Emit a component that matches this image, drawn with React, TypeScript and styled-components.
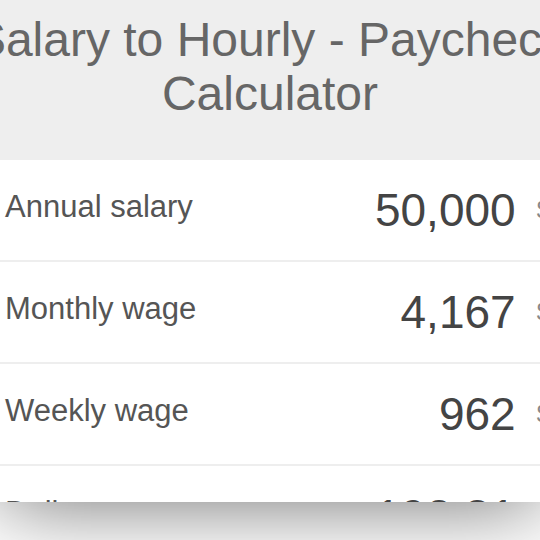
import styled, { createGlobalStyle } from "styled-components"

const GlobalStyle = createGlobalStyle`
html {
  overflow: hidden;
  background: #fff;
}
body {
  margin: 0;
  padding: 0;
  min-height: 100vh;
  background: #fff;
  font-family: "Liberation Sans", Arial, sans-serif;
}
`

const rows = [
  { label: "Annual salary", value: "50,000" },
  { label: "Monthly wage", value: "4,167" },
  { label: "Weekly wage", value: "962" },
  { label: "Daily wage", value: "192.31" },
]

const App = () => {
  return (
    <>
      <GlobalStyle />
      <Card>
        <Inner>
          <Header>
            <Title>Salary to Hourly - Paycheck Calculator</Title>
          </Header>
          {rows.map((r) => (
            <Row key={r.label}>
              <Label>{r.label}</Label>
              <Value>{r.value}</Value>
              <Unit>$</Unit>
            </Row>
          ))}
        </Inner>
      </Card>
    </>
  )
}

export default App

const Card = styled.div`
width: 540px;
height: 502px;
overflow: hidden;
background: #fff;
box-shadow: 0 0 80px rgba(0, 0, 0, 0.58);
`

const Inner = styled.div`
width: 600px;
margin-left: -30px;
`

const Header = styled.div`
background-color: #eeeeee;
padding: 13px 0 39px;
`

const Title = styled.h1`
margin: 0;
font-size: 48px;
line-height: 54px;
font-weight: 400;
color: #666;
text-align: center;
`

const Row = styled.div`
display: flex;
align-items: center;
height: 100px;
padding: 0 20px 0 35px;
border-bottom: 2px solid #eeeeee;
`

const Label = styled.div`
flex: 1;
margin-bottom: 6px;
font-size: 31px;
color: #555;
`

const Value = styled.div`
font-size: 46px;
color: #444;
`

const Unit = styled.div`
margin-left: 21px;
font-size: 24px;
color: #888;
`
